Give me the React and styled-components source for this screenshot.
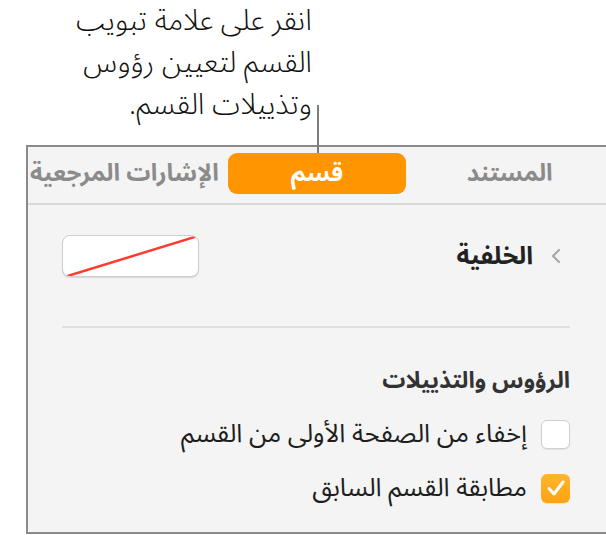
import React from 'react'
import styled, { createGlobalStyle } from 'styled-components'

const GlobalStyle = createGlobalStyle`
  html, body {
    margin: 0;
    padding: 0;
    background: #fff;
    overflow: hidden;
  }
  body {
    font-family: "Noto Sans Arabic", "DejaVu Sans", sans-serif;
  }
`

const Page = styled.div`
  width: 606px;
  height: 535px;
  position: relative;
`

const Callout = styled.div`
  height: 145px;
  display: flex;
  flex-direction: column;
  align-items: flex-end;
  width: 319px;
`

const CalloutText = styled.p`
  direction: rtl;
  text-align: right;
  margin: 0;
  padding-top: 0;
  padding-right: 7px;
  font-size: 29px;
  font-weight: 300;
  line-height: 42px;
  color: #111;
  white-space: nowrap;
`

const Leader = styled.div`
  flex: none;
  width: 2px;
  height: 48px;
  background: #7d7d7d;
  margin-top: -21px;
  position: relative;
  z-index: 2;
`

const Panel = styled.div`
  direction: rtl;
  margin-left: 26px;
  width: 580px;
  height: 389px;
  box-sizing: border-box;
  border: 2px solid #8a8a8a;
  border-right: none;
  background: #f4f4f4;
`

const TabBar = styled.div`
  display: grid;
  grid-template-columns: repeat(3, minmax(0, 1fr));
  align-items: center;
  height: 58px;
  box-sizing: border-box;
  padding: 6px 0 9px;
  border-bottom: 2px solid #dadada;
`

const Tab = styled.div`
  height: 41px;
  margin: 0 7px;
  border-radius: 9px;
  display: flex;
  align-items: center;
  justify-content: center;
  font-size: 24px;
  font-weight: bold;
  color: ${p => (p.$active ? '#fff' : '#8b8b8b')};
  background: ${p => (p.$active ? '#ff9500' : 'transparent')};
  white-space: nowrap;
`

const Body = styled.div`
  padding: 0 36px 0 34px;
`

const BackgroundRow = styled.div`
  display: flex;
  align-items: center;
  justify-content: space-between;
  margin-top: 30px;
  height: 42px;
`

const Disclosure = styled.div`
  display: flex;
  align-items: center;
  gap: 17px;
  padding-right: 8px;
  font-size: 25px;
  font-weight: bold;
  color: #222;
`

const Swatch = styled.div`
  width: 137px;
  height: 42px;
  box-sizing: border-box;
  background: #fff;
  border: 1px solid #cfcfcf;
  border-radius: 8px;
  box-shadow: 0 1px 1px rgba(0, 0, 0, 0.12);
  overflow: hidden;
  svg {
    display: block;
  }
`

const Divider = styled.div`
  height: 2px;
  background: #dedede;
  margin-top: 49px;
`

const Heading = styled.h3`
  margin: 38px 0 0;
  font-size: 23px;
  font-weight: bold;
  color: #333;
  line-height: 30px;
`

const OptionList = styled.div`
  display: flex;
  flex-direction: column;
  gap: 24px;
  margin-top: 23px;
`

const Option = styled.label`
  display: flex;
  align-items: center;
  gap: 14px;
  font-size: 25.5px;
  color: #1e1e1e;
  height: 30px;
  white-space: nowrap;
`

const Box = styled.span`
  flex: none;
  width: 29px;
  height: 29px;
  box-sizing: border-box;
  border-radius: 6px;
  display: flex;
  align-items: center;
  justify-content: center;
  border: ${p => (p.$checked ? 'none' : '1px solid #cfcfcf')};
  background: ${p => (p.$checked ? 'linear-gradient(#ffb52e, #ffa30f)' : '#fff')};
  box-shadow: 0 1px 1px rgba(0, 0, 0, 0.08);
`

const Chevron = () => (
  <svg width="12" height="16" viewBox="0 0 12 16">
    <path d="M9 2 L3 8 L9 14" fill="none" stroke="#a8a8a8" strokeWidth="2.2" strokeLinecap="round" strokeLinejoin="round" />
  </svg>
)

const Check = () => (
  <svg width="20" height="18" viewBox="0 0 20 18">
    <path d="M3 9.5 L8 15 L17 3" fill="none" stroke="#fff" strokeWidth="3" strokeLinecap="round" strokeLinejoin="round" />
  </svg>
)

const App = () => (
  <Page>
    <GlobalStyle />
    <Callout>
      <CalloutText>
        انقر على علامة تبويب
        <br />
        القسم لتعيين رؤوس
        <br />
        وتذييلات القسم.
      </CalloutText>
      <Leader />
    </Callout>
    <Panel>
      <TabBar>
        <Tab>المستند</Tab>
        <Tab $active>قسم</Tab>
        <Tab>الإشارات المرجعية</Tab>
      </TabBar>
      <Body>
        <BackgroundRow>
          <Disclosure>
            <Chevron />
            الخلفية
          </Disclosure>
          <Swatch>
            <svg width="137" height="42" viewBox="0 0 137 42">
              <line x1="0" y1="42" x2="137" y2="0" stroke="#ff3b30" strokeWidth="2.5" />
            </svg>
          </Swatch>
        </BackgroundRow>
        <Divider />
        <Heading>الرؤوس والتذييلات</Heading>
        <OptionList>
          <Option>
            <Box />
            إخفاء من الصفحة الأولى من القسم
          </Option>
          <Option>
            <Box $checked>
              <Check />
            </Box>
            مطابقة القسم السابق
          </Option>
        </OptionList>
      </Body>
    </Panel>
  </Page>
)

export default App
